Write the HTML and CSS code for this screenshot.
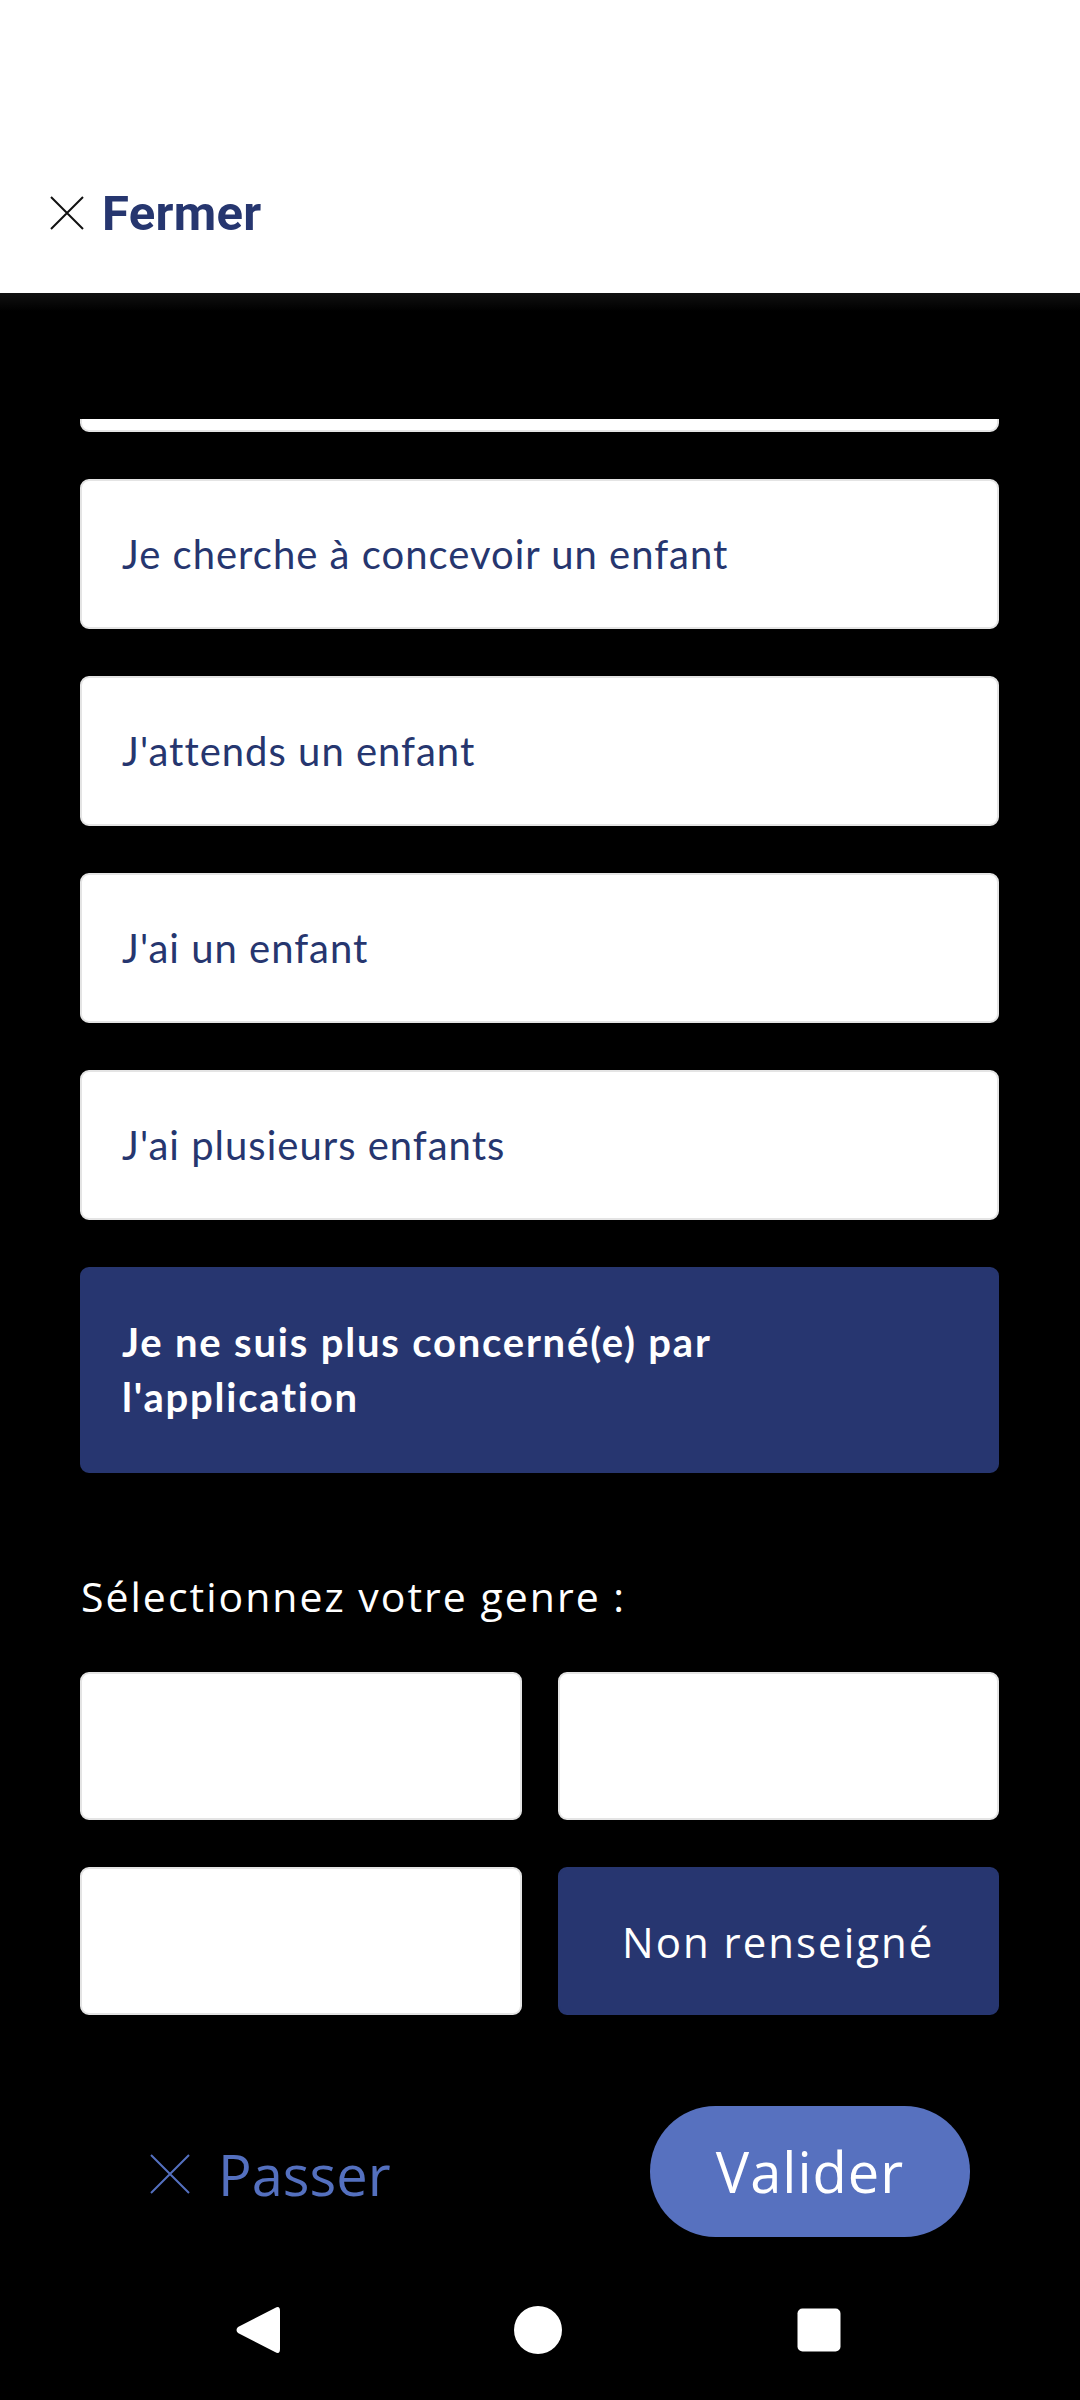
FILE: index.html
```html
<!DOCTYPE html>
<html lang="fr">
<head>
<meta charset="utf-8">
<title>Profil</title>
<link rel="stylesheet" href="styles.css">
</head>
<body>
<div class="screen">
  <header class="topbar">
    <div class="close-row">
      <svg class="close-icon" viewBox="0 0 34 34" width="34" height="34"><path d="M1 1 L33 33 M33 1 L1 33" stroke="#111" stroke-width="2" fill="none"/></svg>
      <span class="close-label">Fermer</span>
    </div>
  </header>
  <div class="topbar-shadow"></div>

  <main class="scroll">
    <div class="options">
      <div class="option option-cut"></div>
      <div class="option">Je cherche à concevoir un enfant</div>
      <div class="option">J'attends un enfant</div>
      <div class="option">J'ai un enfant</div>
      <div class="option">J'ai plusieurs enfants</div>
      <div class="option option-selected"><span class="option-text">Je ne suis plus concerné(e) par l'application</span></div>
    </div>

    <p class="section-label">Sélectionnez votre genre :</p>

    <div class="genre-grid">
      <div class="genre"></div>
      <div class="genre"></div>
      <div class="genre"></div>
      <div class="genre genre-selected">Non renseigné</div>
    </div>
  </main>

  <footer class="actions">
    <div class="skip">
      <svg class="skip-icon" viewBox="0 0 40 40" width="40" height="40"><path d="M1 1 L39 39 M39 1 L1 39" stroke="#5470bf" stroke-width="2" fill="none"/></svg>
      <span class="skip-label">Passer</span>
    </div>
    <div class="validate">Valider</div>
  </footer>

  <nav class="navbar">
    <svg viewBox="0 0 48 50" width="48" height="50" class="nav-back"><path d="M41 3 Q46 0 46 6 L46 44 Q46 50 41 47 L4 28 Q1 25 4 22 Z" fill="#fff"/></svg>
    <svg viewBox="0 0 50 50" width="50" height="50" class="nav-home"><circle cx="25" cy="25" r="24" fill="#fff"/></svg>
    <svg viewBox="0 0 44 44" width="44" height="44" class="nav-recent"><rect x="0.5" y="0.5" width="43" height="43" rx="5" fill="#fff"/></svg>
  </nav>
</div>
</body>
</html>
```

FILE: styles.css
```css
* { box-sizing: border-box; }

html, body {
  margin: 0;
  padding: 0;
  background: #000;
}

.screen {
  width: 1080px;
  height: 2400px;
  display: flex;
  flex-direction: column;
  overflow: hidden;
  background: #000;
}

.topbar {
  height: 293px;
  flex: none;
  background: #fff;
  padding-top: 182px;
  padding-left: 50px;
}

.close-row {
  display: flex;
  align-items: center;
  height: 62px;
  gap: 18px;
}

.close-icon {
  display: block;
  width: 34px;
  height: 34px;
}

.close-label {
  font-family: Roboto, "Liberation Sans", sans-serif;
  font-weight: 700;
  font-size: 49px;
  color: #26366f;
  letter-spacing: 0.3px;
}

.topbar-shadow {
  height: 18px;
  flex: none;
  background: linear-gradient(#111, #000);
}

.scroll {
  flex: 1;
  margin-top: 108px;
  overflow: hidden;
  padding: 0 81px 0 80px;
}

.options {
  display: flex;
  flex-direction: column;
  gap: 47px;
  margin-top: -137px;
}

.option {
  height: 150px;
  background: #fff;
  border: 2px solid #e4e4e4;
  border-radius: 9px;
  display: flex;
  align-items: center;
  padding-left: 40px;
  font-family: Lato, "Open Sans", sans-serif;
  font-size: 40px;
  color: #26366f;
  letter-spacing: 1px;
}

.option-cut {
  flex: none;
}

.option-selected {
  height: 206px;
  background: #273670;
  border-color: #273670;
  color: #fff;
  font-weight: 700;
  line-height: 55px;
  letter-spacing: 1.8px;
}

.option-text {
  max-width: 680px;
}

.section-label {
  margin: 98px 0 51px 1px;
  font-family: "Open Sans", Lato, sans-serif;
  font-size: 41px;
  line-height: 50px;
  color: #fff;
  font-weight: 400;
  letter-spacing: 2px;
}

.genre-grid {
  display: grid;
  grid-template-columns: 1fr 1fr;
  column-gap: 36px;
  row-gap: 47px;
}

.genre {
  height: 148px;
  background: #fff;
  border: 2px solid #e4e4e4;
  border-radius: 9px;
  display: flex;
  align-items: center;
  justify-content: center;
  font-family: "Open Sans", Lato, sans-serif;
  font-size: 42px;
  color: #26366f;
  letter-spacing: 2px;
}

.genre-selected {
  background: #273670;
  border-color: #273670;
  color: #fff;
}

.actions {
  height: 178px;
  flex: none;
  display: flex;
  align-items: center;
  justify-content: space-between;
  padding: 0 110px 0 150px;
}

.skip {
  display: flex;
  align-items: center;
  gap: 28px;
  padding-top: 6px;
}

.skip-icon {
  display: block;
  width: 40px;
  height: 40px;
}

.skip-label {
  font-family: "Open Sans", Lato, sans-serif;
  font-size: 56px;
  color: #5470bf;
}

.validate {
  width: 320px;
  height: 131px;
  border-radius: 66px;
  background: #5771bf;
  color: #fff;
  font-family: "Open Sans", Lato, sans-serif;
  font-size: 56px;
  letter-spacing: 1px;
  display: flex;
  align-items: center;
  justify-content: center;
}

.navbar {
  height: 140px;
  flex: none;
  display: flex;
  align-items: center;
  padding-left: 234px;
}

.nav-back { display: block; }
.nav-home { display: block; margin-left: 231px; }
.nav-recent { display: block; margin-left: 234px; }
```
